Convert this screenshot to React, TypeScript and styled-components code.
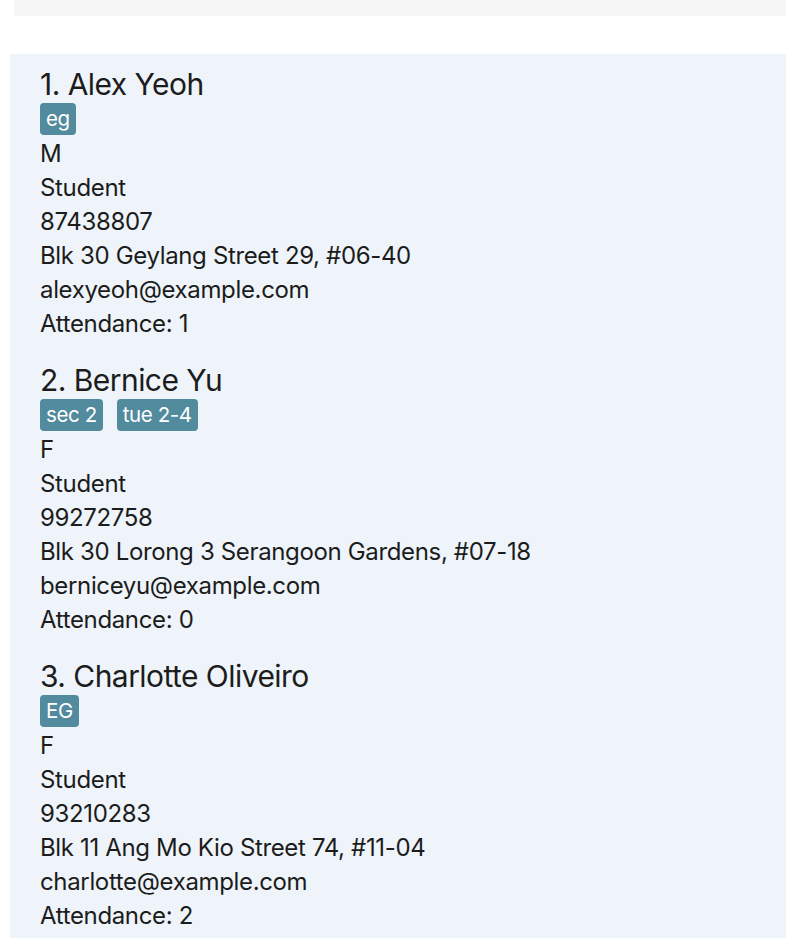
import React from "react";
import styled, { createGlobalStyle } from "styled-components";

const Global = createGlobalStyle`
  html, body { margin: 0; padding: 0; background: #ffffff; }
  body { font-family: Inter, "Noto Sans", sans-serif; color: #1c1c1c; overflow: hidden; }
`;

const Page = styled.div`
  display: flex;
  flex-direction: column;
  padding-left: 10px;
  height: 938px;
`;

const TopBar = styled.div`
  height: 16px;
  margin-left: 4px;
  background: #f7f7f7;
  flex-shrink: 0;
`;

const ListPanel = styled.div`
  margin-top: 38px;
  background: #eef4f9;
  flex: 1;
  padding: 12px 0 0 30px;
  display: flex;
  flex-direction: column;
  gap: 21px;
  overflow: hidden;
`;

const Card = styled.div`
  display: flex;
  flex-direction: column;
`;

const Name = styled.div`
  font-size: 30px;
  line-height: 36px;
  height: 36px;
  letter-spacing: -0.55px;
`;

const TagRow = styled.div`
  display: flex;
  gap: 14px;
  height: 34px;
  align-items: flex-start;
  padding-top: 1px;
`;

const Tag = styled.span`
  background: #528a9e;
  color: #ffffff;
  font-size: 20.5px;
  letter-spacing: -0.4px;
  line-height: 32px;
  height: 32px;
  padding: 0 6px;
  border-radius: 4px;
`;

const Field = styled.div`
  font-size: 24px;
  line-height: 34px;
  height: 34px;
  letter-spacing: -0.35px;
`;

type Person = {
  name: string;
  tags: string[];
  gender: string;
  role: string;
  phone: string;
  address: string;
  email: string;
  attendance: number;
};

const people: Person[] = [
  {
    name: "Alex Yeoh",
    tags: ["eg"],
    gender: "M",
    role: "Student",
    phone: "87438807",
    address: "Blk 30 Geylang Street 29, #06-40",
    email: "alexyeoh@example.com",
    attendance: 1,
  },
  {
    name: "Bernice Yu",
    tags: ["sec 2", "tue 2-4"],
    gender: "F",
    role: "Student",
    phone: "99272758",
    address: "Blk 30 Lorong 3 Serangoon Gardens, #07-18",
    email: "berniceyu@example.com",
    attendance: 0,
  },
  {
    name: "Charlotte Oliveiro",
    tags: ["EG"],
    gender: "F",
    role: "Student",
    phone: "93210283",
    address: "Blk 11 Ang Mo Kio Street 74, #11-04",
    email: "charlotte@example.com",
    attendance: 2,
  },
];

export default function App() {
  return (
    <>
      <Global />
      <Page>
        <TopBar />
        <ListPanel>
          {people.map((p, i) => (
            <Card key={p.name}>
              <Name>
                {i + 1}. {p.name}
              </Name>
              <TagRow>
                {p.tags.map((t) => (
                  <Tag key={t}>{t}</Tag>
                ))}
              </TagRow>
              <Field>{p.gender}</Field>
              <Field>{p.role}</Field>
              <Field>{p.phone}</Field>
              <Field>{p.address}</Field>
              <Field>{p.email}</Field>
              <Field>Attendance: {p.attendance}</Field>
            </Card>
          ))}
        </ListPanel>
      </Page>
    </>
  );
}
